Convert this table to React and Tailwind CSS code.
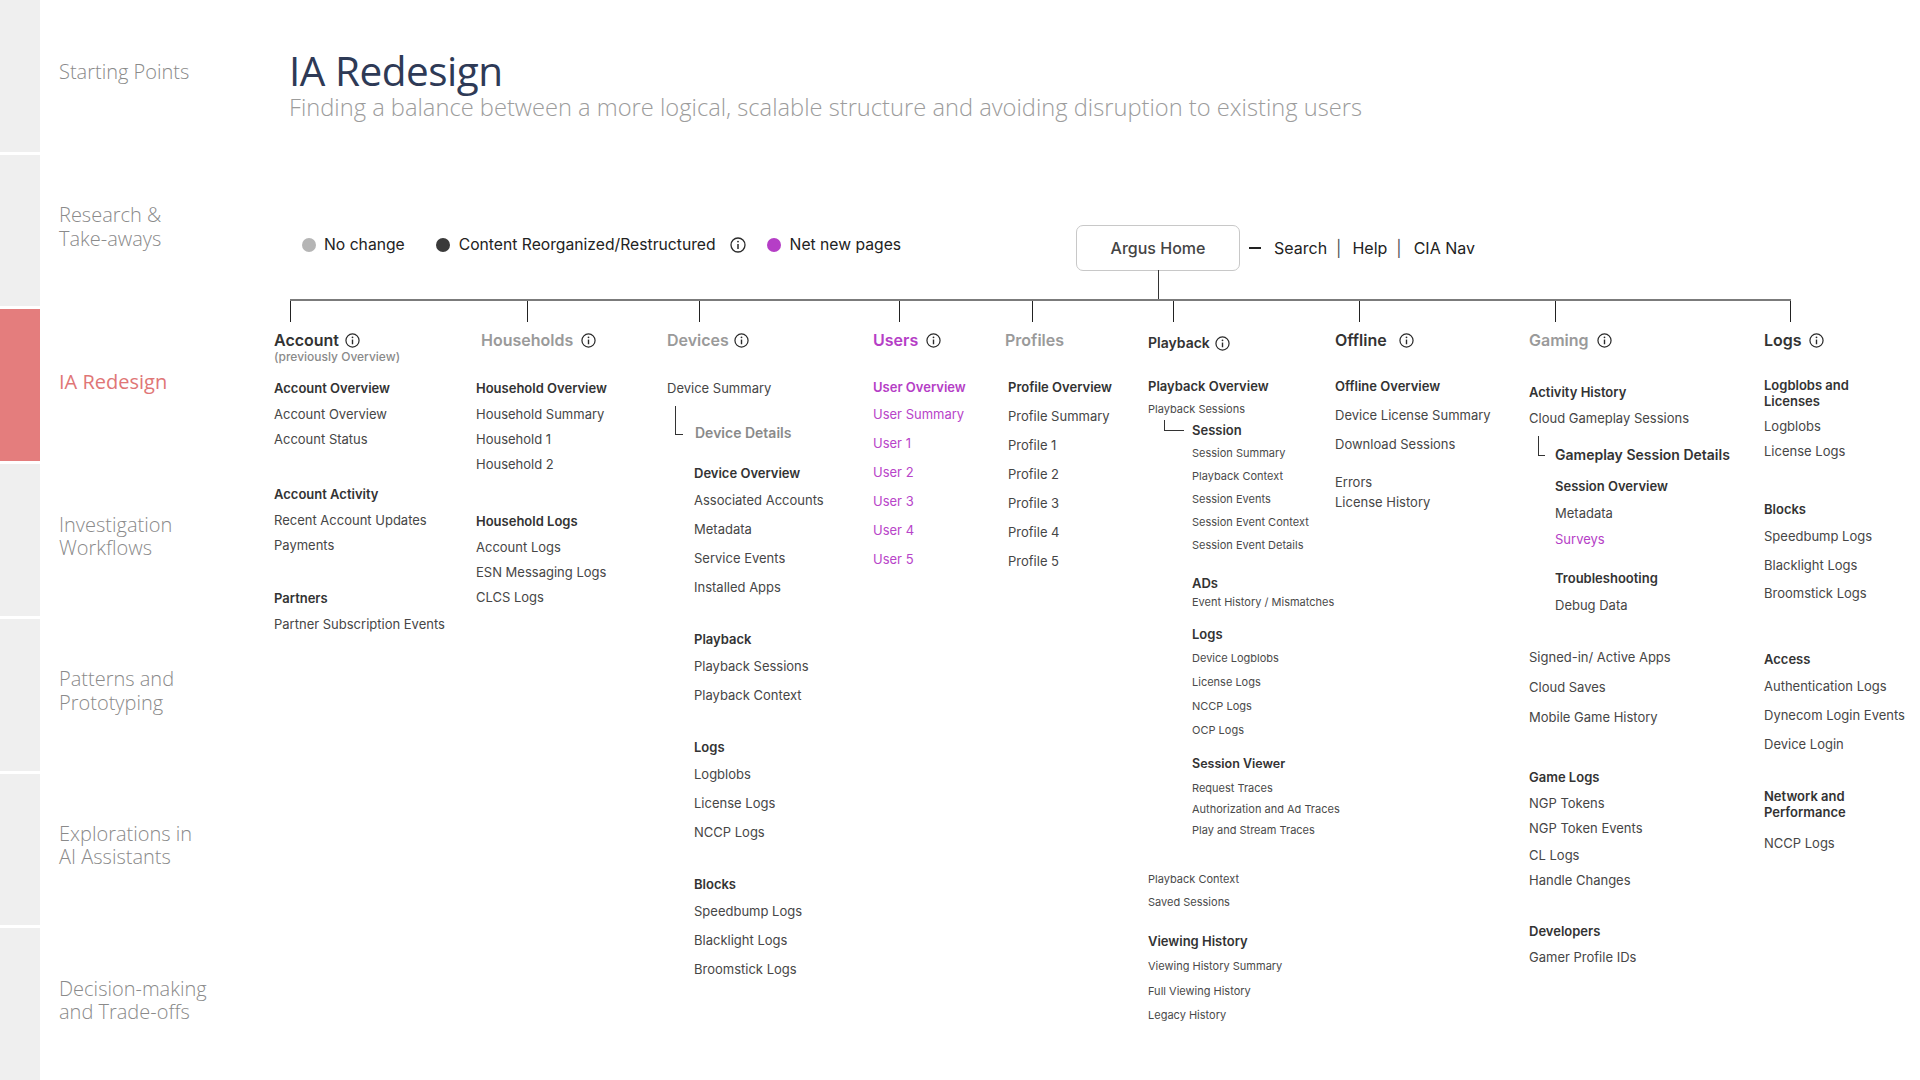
import React from "react";

const Info = ({ c = "" }) => (
  <svg width="15" height="15" viewBox="0 0 16 16" className={`shrink-0 ${c}`} fill="none">
    <circle cx="8" cy="8" r="7" stroke="#2b2b2b" strokeWidth="1.3" />
    <line x1="8" y1="7" x2="8" y2="12" stroke="#2b2b2b" strokeWidth="1.5" />
    <circle cx="8" cy="4.6" r="0.95" fill="#2b2b2b" />
  </svg>
);

const T = ({ c = "", children }) => (
  <div className={`text-[13px] leading-[16px] text-[#464646] whitespace-nowrap ${c}`}>{children}</div>
);
const B = ({ c = "", children }) => (
  <div className={`text-[13px] leading-[16px] font-semibold text-[#333] whitespace-nowrap ${c}`}>{children}</div>
);
const S = ({ c = "", children }) => (
  <div className={`text-[11px] leading-[14px] text-[#4a4a4a] whitespace-nowrap ${c}`}>{children}</div>
);

const Head = ({ children, color = "text-[#333]", icon = true, gap = "ml-[6px]", c = "" }) => (
  <div className={`flex items-center h-[20px] ${c}`}>
    <span className={`text-[16px] leading-[20px] font-semibold whitespace-nowrap ${color}`}>{children}</span>
    {icon && <Info c={gap} />}
  </div>
);

const SideRow = ({ active, children }) => (
  <div className="flex-1 flex">
    <div className={`w-[40px] h-full ${active ? "bg-[#e47d7d]" : "bg-[#efefef]"}`} />
    <div
      className={`flex items-center pl-[19px] pb-[8px] text-[20px] leading-[23.5px] font-['Open_Sans',sans-serif] ${
        active ? "text-[#e07676] font-medium" : "text-[#8a8a8a] font-light"
      }`}
    >
      <div>{children}</div>
    </div>
  </div>
);

export default function App() {
  return (
    <div className="flex w-[1920px] h-[1080px] bg-white overflow-hidden font-[Inter,sans-serif]">
      <aside className="w-[260px] shrink-0 flex flex-col gap-[3px]">
        <SideRow>Starting Points</SideRow>
        <SideRow>
          Research &amp;
          <br />
          Take-aways
        </SideRow>
        <SideRow active>IA Redesign</SideRow>
        <SideRow>
          Investigation
          <br />
          Workflows
        </SideRow>
        <SideRow>
          Patterns and
          <br />
          Prototyping
        </SideRow>
        <SideRow>
          Explorations in
          <br />
          AI Assistants
        </SideRow>
        <SideRow>
          Decision-making
          <br />
          and Trade-offs
        </SideRow>
      </aside>

      <main className="flex-1 flex flex-col">
        <div className="pl-[29px] pt-[49px] font-['Open_Sans',sans-serif]">
          <h1 className="text-[40.5px] leading-[44px] font-medium text-[#2e3a56] tracking-[-0.5px]">IA Redesign</h1>
          <p className="text-[23.7px] leading-[28px] font-light text-[#9c9c9c] whitespace-nowrap">
            Finding a balance between a more logical, scalable structure and avoiding disruption to existing users
          </p>
        </div>

        <div className="flex items-center mt-[104px] pl-[42px]">
          <div className="w-[774px] flex items-center mb-[6px] text-[15.7px] leading-[20px] text-[#222]">
            <span className="w-[14px] h-[14px] rounded-full bg-[#b5b5b5]" />
            <span className="ml-[8px]">No change</span>
            <span className="ml-[31px] w-[14px] h-[14px] rounded-full bg-[#3a3a3a]" />
            <span className="ml-[9px]">Content Reorganized/Restructured</span>
            <Info c="ml-[14px] w-[16px] h-[16px]" />
            <span className="ml-[21px] w-[14px] h-[14px] rounded-full bg-[#b53ec6]" />
            <span className="ml-[9px]">Net new pages</span>
          </div>
          <div className="relative w-[164px] h-[46px] rounded-[7px] border-[1.5px] border-[#c8c8c8] flex items-center justify-center text-[16px] font-medium text-[#444]">
            Argus Home
            <div className="absolute top-full left-1/2 w-px h-[29px] bg-[#333]" />
          </div>
          <div className="ml-[9px] w-[12px] h-[1.5px] bg-[#222]" />
          <div className="flex items-center text-[16px] leading-[20px] text-[#222]">
            <span className="ml-[13px]">Search</span>
            <span className="ml-[9px] text-[#555]">|</span>
            <span className="ml-[11px]">Help</span>
            <span className="ml-[9px] text-[#555]">|</span>
            <span className="ml-[12px]">CIA Nav</span>
          </div>
        </div>

        {/* tree trunk */}
        <div className="ml-[30px] mt-[28px] w-[1501px] h-[2px] bg-[#7b7b7b]" />
        <div className="ml-[30px] flex h-[21px]">
          <div className="w-px h-full bg-[#222]" />
          <div className="ml-[236px] w-px h-full bg-[#222]" />
          <div className="ml-[171px] w-px h-full bg-[#222]" />
          <div className="ml-[199px] w-px h-full bg-[#222]" />
          <div className="ml-[132px] w-px h-full bg-[#222]" />
          <div className="ml-[140px] w-px h-full bg-[#222]" />
          <div className="ml-[185px] w-px h-full bg-[#222]" />
          <div className="ml-[195px] w-px h-full bg-[#222]" />
          <div className="ml-[234px] w-px h-full bg-[#222]" />
        </div>

        <div className="flex mt-[8px] pl-[14px]">
          {/* Account */}
          <div className="w-[202px] shrink-0 flex flex-col">
            <Head gap="ml-[6px]">Account</Head>
            <div className="text-[12px] leading-[13px] font-medium text-[#8a8a8a]">(previously Overview)</div>
            <B c="mt-[17px]">Account Overview</B>
            <T c="mt-[10px]">Account Overview</T>
            <T c="mt-[9px]">Account Status</T>
            <B c="mt-[39px]">Account Activity</B>
            <T c="mt-[10px]">Recent Account Updates</T>
            <T c="mt-[9px]">Payments</T>
            <B c="mt-[37px]">Partners</B>
            <T c="mt-[10px]">Partner Subscription Events</T>
          </div>

          {/* Households */}
          <div className="w-[191px] shrink-0 flex flex-col">
            <Head color="text-[#9a9a9a]" gap="ml-[8px]" c="ml-[5px]">
              Households
            </Head>
            <B c="mt-[30px]">Household Overview</B>
            <T c="mt-[10px]">Household Summary</T>
            <T c="mt-[9px]">Household 1</T>
            <T c="mt-[9px]">Household 2</T>
            <B c="mt-[41px]">Household Logs</B>
            <T c="mt-[10px]">Account Logs</T>
            <T c="mt-[9px]">ESN Messaging Logs</T>
            <T c="mt-[9px]">CLCS Logs</T>
          </div>

          {/* Devices */}
          <div className="w-[206px] shrink-0 flex flex-col">
            <Head color="text-[#9a9a9a]" gap="ml-[5px]">
              Devices
            </Head>
            <T c="mt-[30px]">Device Summary</T>
            <div className="mt-[10px] flex items-start">
              <div className="ml-[8px] w-[8px] h-[29px] border-l border-b border-[#333]" />
              <div className="ml-[12px] mt-[18px] text-[14px] leading-[18px] font-semibold text-[#8a8a8a] whitespace-nowrap">
                Device Details
              </div>
            </div>
            <div className="pl-[27px] flex flex-col">
              <B c="mt-[23px]">Device Overview</B>
              <T c="mt-[11px]">Associated Accounts</T>
              <T c="mt-[13px]">Metadata</T>
              <T c="mt-[13px]">Service Events</T>
              <T c="mt-[13px]">Installed Apps</T>
              <B c="mt-[36px]">Playback</B>
              <T c="mt-[11px]">Playback Sessions</T>
              <T c="mt-[13px]">Playback Context</T>
              <B c="mt-[36px]">Logs</B>
              <T c="mt-[11px]">Logblobs</T>
              <T c="mt-[13px]">License Logs</T>
              <T c="mt-[13px]">NCCP Logs</T>
              <B c="mt-[36px]">Blocks</B>
              <T c="mt-[11px]">Speedbump Logs</T>
              <T c="mt-[13px]">Blacklight Logs</T>
              <T c="mt-[13px]">Broomstick Logs</T>
            </div>
          </div>

          {/* Users */}
          <div className="w-[132px] shrink-0 flex flex-col">
            <Head color="text-[#b53ec6]" gap="ml-[8px]">
              Users
            </Head>
            <B c="mt-[29px] !text-[#b53ec6]">User Overview</B>
            <T c="mt-[11px] !text-[#b844c9]">User Summary</T>
            <T c="mt-[13px] !text-[#b844c9]">User 1</T>
            <T c="mt-[13px] !text-[#b844c9]">User 2</T>
            <T c="mt-[13px] !text-[#b844c9]">User 3</T>
            <T c="mt-[13px] !text-[#b844c9]">User 4</T>
            <T c="mt-[13px] !text-[#b844c9]">User 5</T>
          </div>

          {/* Profiles */}
          <div className="w-[143px] shrink-0 flex flex-col">
            <Head color="text-[#9a9a9a]" icon={false}>
              Profiles
            </Head>
            <div className="pl-[3px] flex flex-col">
              <B c="mt-[29px]">Profile Overview</B>
              <T c="mt-[13px]">Profile Summary</T>
              <T c="mt-[13px]">Profile 1</T>
              <T c="mt-[13px]">Profile 2</T>
              <T c="mt-[13px]">Profile 3</T>
              <T c="mt-[13px]">Profile 4</T>
              <T c="mt-[13px]">Profile 5</T>
            </div>
          </div>

          {/* Playback */}
          <div className="w-[187px] shrink-0 flex flex-col">
            <div className="flex items-center h-[20px] mt-[3px]">
              <span className="text-[14px] leading-[20px] font-semibold text-[#333]">Playback</span>
              <Info c="ml-[5px]" />
            </div>
            <B c="mt-[25px]">Playback Overview</B>
            <S c="mt-[8px]">Playback Sessions</S>
            <div className="mt-[4px] flex items-start">
              <div className="ml-[16px] w-[20px] h-[11px] border-l border-b border-[#333]" />
              <B c="ml-[8px] mt-[2px]">Session</B>
            </div>
            <div className="pl-[44px] flex flex-col">
              <S c="mt-[8px]">Session Summary</S>
              <S c="mt-[9px]">Playback Context</S>
              <S c="mt-[9px]">Session Events</S>
              <S c="mt-[9px]">Session Event Context</S>
              <S c="mt-[9px]">Session Event Details</S>
              <B c="mt-[23px]">ADs</B>
              <S c="mt-[4px]">Event History / Mismatches</S>
              <B c="mt-[17px]">Logs</B>
              <S c="mt-[9px]">Device Logblobs</S>
              <S c="mt-[10px]">License Logs</S>
              <S c="mt-[10px]">NCCP Logs</S>
              <S c="mt-[10px]">OCP Logs</S>
              <B c="mt-[19px] !text-[12.5px]">Session Viewer</B>
              <S c="mt-[9px]">Request Traces</S>
              <S c="mt-[7px]">Authorization and Ad Traces</S>
              <S c="mt-[7px]">Play and Stream Traces</S>
            </div>
            <S c="mt-[35px]">Playback Context</S>
            <S c="mt-[9px]">Saved Sessions</S>
            <B c="mt-[24px]">Viewing History</B>
            <S c="mt-[10px]">Viewing History Summary</S>
            <S c="mt-[11px]">Full Viewing History</S>
            <S c="mt-[10px]">Legacy History</S>
          </div>

          {/* Offline */}
          <div className="w-[194px] shrink-0 flex flex-col">
            <Head gap="ml-[12px]">Offline</Head>
            <B c="mt-[28px]">Offline Overview</B>
            <T c="mt-[13px]">Device License Summary</T>
            <T c="mt-[13px]">Download Sessions</T>
            <T c="mt-[22px]">Errors</T>
            <T c="mt-[4px]">License History</T>
          </div>

          {/* Gaming */}
          <div className="w-[235px] shrink-0 flex flex-col">
            <Head color="text-[#9a9a9a]" gap="ml-[8px]">
              Gaming
            </Head>
            <B c="mt-[34px]">Activity History</B>
            <T c="mt-[10px]">Cloud Gameplay Sessions</T>
            <div className="mt-[10px] flex items-start">
              <div className="ml-[9px] w-[7px] h-[20px] border-l border-b border-[#333]" />
              <div className="ml-[10px] mt-[10px] text-[14px] leading-[18px] font-semibold text-[#333] whitespace-nowrap">
                Gameplay Session Details
              </div>
            </div>
            <div className="pl-[26px] flex flex-col">
              <B c="mt-[14px]">Session Overview</B>
              <T c="mt-[11px]">Metadata</T>
              <T c="mt-[10px] !text-[#b53ec6]">Surveys</T>
              <B c="mt-[23px]">Troubleshooting</B>
              <T c="mt-[11px]">Debug Data</T>
            </div>
            <T c="mt-[36px]">Signed-in/ Active Apps</T>
            <T c="mt-[14px]">Cloud Saves</T>
            <T c="mt-[14px]">Mobile Game History</T>
            <B c="mt-[44px]">Game Logs</B>
            <T c="mt-[10px]">NGP Tokens</T>
            <T c="mt-[9px]">NGP Token Events</T>
            <T c="mt-[11px]">CL Logs</T>
            <T c="mt-[9px]">Handle Changes</T>
            <B c="mt-[35px]">Developers</B>
            <T c="mt-[10px]">Gamer Profile IDs</T>
          </div>

          {/* Logs */}
          <div className="flex-1 flex flex-col">
            <Head gap="ml-[7px]">Logs</Head>
            <B c="mt-[27px]">
              Logblobs and
              <br />
              Licenses
            </B>
            <T c="mt-[9px]">Logblobs</T>
            <T c="mt-[9px]">License Logs</T>
            <B c="mt-[42px]">Blocks</B>
            <T c="mt-[11px]">Speedbump Logs</T>
            <T c="mt-[13px]">Blacklight Logs</T>
            <T c="mt-[12px]">Broomstick Logs</T>
            <B c="mt-[50px]">Access</B>
            <T c="mt-[11px]">Authentication Logs</T>
            <T c="mt-[13px]">Dynecom Login Events</T>
            <T c="mt-[13px]">Device Login</T>
            <B c="mt-[36px]">
              Network and
              <br />
              Performance
            </B>
            <T c="mt-[15px]">NCCP Logs</T>
          </div>
        </div>
      </main>
    </div>
  );
}
